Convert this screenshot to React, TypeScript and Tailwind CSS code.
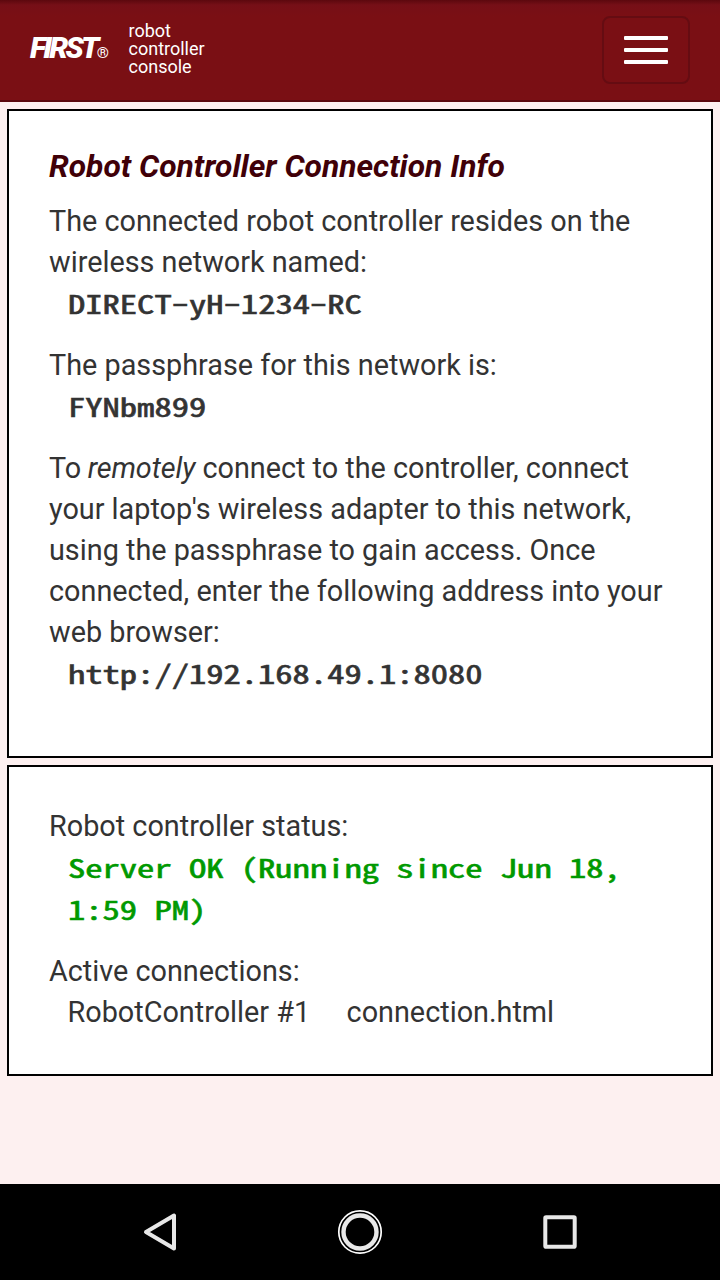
import React from "react";

const mono = "font-['Noto_Sans_Mono_CJK_JP','Noto_Sans_Mono_CJK_SC','Liberation_Mono',monospace] font-normal [font-feature-settings:'zero'] [-webkit-text-stroke:0.6px_currentColor]";

function Value({ children, green }: { children: React.ReactNode; green?: boolean }) {
  return (
    <div className={`-mt-px mb-px ml-[19px] w-fit origin-left scale-x-[1.329] whitespace-nowrap text-[26px] leading-[42px] ${mono} ${green ? "text-[#009900]" : ""}`}>
      {children}
    </div>
  );
}

function Dash() {
  return <span className="inline-block -translate-y-[2px] scale-x-[1.3]">-</span>;
}

function Header() {
  return (
    <header className="flex h-[102px] items-center justify-between border-b-2 border-b-[#5c080e] bg-[#7a0f14] bg-linear-to-b from-[#5c080e] via-[#760f17] via-5% to-[#7a0f14] to-16% px-[30px] text-white">
      <div className="flex items-center pb-[3px]">
        <div className="flex w-[98.5px] items-baseline pb-[2px]">
          <span className="text-[30px] leading-[36px] font-black tracking-[-2.7px] italic">FIRST</span>
          <span className="text-[15.5px] leading-[18px]">®</span>
        </div>
        <div className="text-[18px] leading-[18px]">
          robot
          <br />
          controller
          <br />
          console
        </div>
      </div>
      <button aria-label="Menu" className="flex h-[68px] w-[88px] flex-col items-center justify-center gap-2 rounded-lg border-2 border-[#650c12]">
        <span className="h-1 w-11 rounded-[1px] bg-white" />
        <span className="h-1 w-11 rounded-[1px] bg-white" />
        <span className="h-1 w-11 rounded-[1px] bg-white" />
      </button>
    </header>
  );
}

function NavBar() {
  return (
    <nav className="flex h-24 items-center justify-between bg-black px-[136px]">
      <svg width="48" height="48" viewBox="0 0 48 48" fill="none">
        <path d="M38 7.5V40.5L10 24Z" stroke="#e8e8e8" strokeWidth="4" strokeLinejoin="round" />
      </svg>
      <svg width="48" height="48" viewBox="0 0 48 48" fill="none">
        <circle cx="24" cy="24" r="21.2" stroke="#fff" strokeWidth="1.7" />
        <circle cx="24" cy="24" r="16.5" stroke="#e8e8e8" strokeWidth="4.4" />
      </svg>
      <svg width="48" height="48" viewBox="0 0 48 48" fill="none">
        <rect x="9.3" y="9.3" width="29.4" height="29.4" rx="0.8" stroke="#e8e8e8" strokeWidth="4" />
      </svg>
    </nav>
  );
}

export default function App() {
  return (
    <div className="flex h-[1280px] w-[720px] flex-col bg-[#fdf0f0] font-['Roboto',sans-serif] text-[#333333]">
      <Header />
      <main className="flex flex-1 flex-col gap-[7px] px-[7px] pt-[7px] text-[28.8px] leading-[41px] whitespace-nowrap">
        <section className="flex h-[649px] flex-col gap-5 border-2 border-black bg-white px-[40px] pt-[36px]">
          <div>
            <h1 className="mb-[14px] text-[31.75px] leading-[40px] font-bold text-[#400008] italic">Robot Controller Connection Info</h1>
            <p>
              The connected robot controller resides on the
              <br />
              wireless network named:
            </p>
            <Value>
              DIRECT
              <Dash />
              yH
              <Dash />
              1234
              <Dash />
              RC
            </Value>
          </div>
          <div>
            <p>The passphrase for this network is:</p>
            <Value>FYNbm899</Value>
          </div>
          <div>
            <p>
              To <em className="-ml-[0.7px] tracking-[-0.1px]">remotely</em> connect to the controller, connect
              <br />
              your laptop's wireless adapter to this network,
              <br />
              using the passphrase to gain access. Once
              <br />
              connected, enter the following address into your
              <br />
              web browser:
            </p>
            <Value>http://192.168.49.1:8080</Value>
          </div>
        </section>
        <section className="flex h-[311px] flex-col gap-5 border-2 border-black bg-white px-[40px] pt-[39px]">
          <div>
            <p>Robot controller status:</p>
            <Value green>
              Server OK (Running since Jun 18,
              <br />
              1:59 PM)
            </Value>
          </div>
          <div>
            <p>Active connections:</p>
            <div className="flex gap-[36.4px] pl-[18.5px]">
              <span>RobotController #1</span>
              <span>connection.html</span>
            </div>
          </div>
        </section>
      </main>
      <NavBar />
    </div>
  );
}
